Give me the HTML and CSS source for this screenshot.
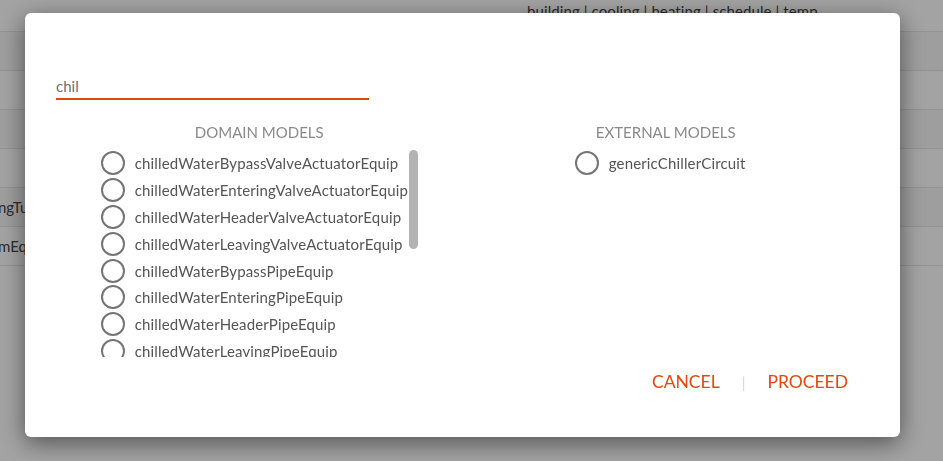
FILE: index.html
```html
<!DOCTYPE html>
<html lang="en">
<head>
    <meta charset="UTF-8">
    <meta name="viewport" content="width=device-width, initial-scale=1.0">
    <title>Select model</title>
    <link rel="stylesheet" href="styles.css">
</head>
<body>
    <div class="page">
        <div class="row row-tags"><span class="tags">building | cooling | heating | schedule | temp</span></div>
        <div class="row"></div>
        <div class="row"></div>
        <div class="row"></div>
        <div class="row"></div>
        <div class="row"><span class="cell">ngTurbineEquip</span></div>
        <div class="row"><span class="cell">mEquip</span></div>
    </div>

    <div class="overlay">
        <div class="modal">
            <input class="search" type="text" value="chil">

            <div class="columns">
                <div class="column">
                    <h2>Domain models</h2>
                    <ul class="models scroll">
                        <li><span class="radio"></span>chilledWaterBypassValveActuatorEquip</li>
                        <li><span class="radio"></span>chilledWaterEnteringValveActuatorEquip</li>
                        <li><span class="radio"></span>chilledWaterHeaderValveActuatorEquip</li>
                        <li><span class="radio"></span>chilledWaterLeavingValveActuatorEquip</li>
                        <li><span class="radio"></span>chilledWaterBypassPipeEquip</li>
                        <li><span class="radio"></span>chilledWaterEnteringPipeEquip</li>
                        <li><span class="radio"></span>chilledWaterHeaderPipeEquip</li>
                        <li><span class="radio"></span>chilledWaterLeavingPipeEquip</li>
                        <li><span class="radio"></span>chillerEquip</li>
                        <li><span class="radio"></span>chillerPlantEquip</li>
                        <li><span class="radio"></span>chilledWaterPumpEquip</li>
                        <li><span class="radio"></span>chilledWaterSystemEquip</li>
                    </ul>
                </div>
                <div class="column">
                    <h2>External models</h2>
                    <ul class="models external">
                        <li><span class="radio"></span>genericChillerCircuit</li>
                    </ul>
                </div>
            </div>

            <div class="actions">
                <button type="button">Cancel</button>
                <span class="divider">|</span>
                <button type="button">Proceed</button>
            </div>
        </div>
    </div>
</body>
</html>
```

FILE: styles.css
```css
body {
    font-family: Lato, "Open Sans", sans-serif;
    background-color: #ffffff;
    margin: 0;
    padding: 0;
    overflow: hidden;
}

.page {
    height: 461px;
}

.row {
    height: 38px;
    border-bottom: 1px solid #e6e6e6;
    display: flex;
    align-items: center;
    font-size: 15px;
    color: #444;
}

.row:nth-child(even) {
    background-color: #f7f7f7;
}

.row-tags {
    height: 31px;
    align-items: flex-start;
}

.tags {
    margin-left: 527px;
    margin-top: 2px;
    letter-spacing: 0.1px;
}

.cell {
    margin-left: -2px;
}

.overlay {
    position: fixed;
    top: 0;
    left: 0;
    right: 0;
    bottom: 0;
    background-color: rgba(0, 0, 0, 0.36);
    padding: 13px 0 0 25px;
}

.modal {
    width: 875px;
    height: 424px;
    box-sizing: border-box;
    padding: 61px 31px 0 31px;
    background-color: white;
    border-radius: 6px;
    box-shadow: 0 6px 24px rgba(0, 0, 0, 0.5);
    display: flex;
    flex-direction: column;
}

.search {
    width: 313px;
    height: 26px;
    box-sizing: border-box;
    padding: 0;
    border: none;
    border-bottom: 2px solid #e2490b;
    font-family: Lato, sans-serif;
    font-size: 15px;
    color: #6e6e6e;
    outline: none;
}

.columns {
    display: flex;
    margin-top: 23px;
}

.column {
    flex: 1;
    display: flex;
    flex-direction: column;
    align-items: center;
}

h2 {
    margin: 0 0 9px 0;
    font-size: 15px;
    font-weight: normal;
    line-height: 18px;
    text-transform: uppercase;
    color: #8a8a8a;
}

.models {
    list-style: none;
    margin: 0;
    padding: 0;
}

.models li {
    height: 26.8px;
    display: flex;
    align-items: center;
    font-size: 15px;
    letter-spacing: 0.15px;
    color: #555;
    white-space: nowrap;
}

.scroll {
    width: 317px;
    height: 207px;
    overflow: hidden;
    position: relative;
}

.scroll::after {
    content: "";
    position: absolute;
    top: 0;
    right: 0;
    width: 9px;
    height: 99px;
    border-radius: 5px;
    background-color: #b3b3b3;
}

.external {
    width: 182px;
}

.radio {
    width: 20px;
    height: 20px;
    border: 2px solid #757575;
    border-radius: 50%;
    margin-right: 10px;
    flex-shrink: 0;
}

.actions {
    display: flex;
    justify-content: flex-end;
    align-items: center;
    margin-top: 10px;
    padding-right: 21px;
    gap: 22px;
}

.actions button {
    background: none;
    border: none;
    padding: 0;
    font-family: Lato, sans-serif;
    font-size: 17.5px;
    text-transform: uppercase;
    color: #e2490b;
    cursor: pointer;
    line-height: 30px;
}

.divider {
    color: #d8d8d8;
    font-size: 15px;
}
```
